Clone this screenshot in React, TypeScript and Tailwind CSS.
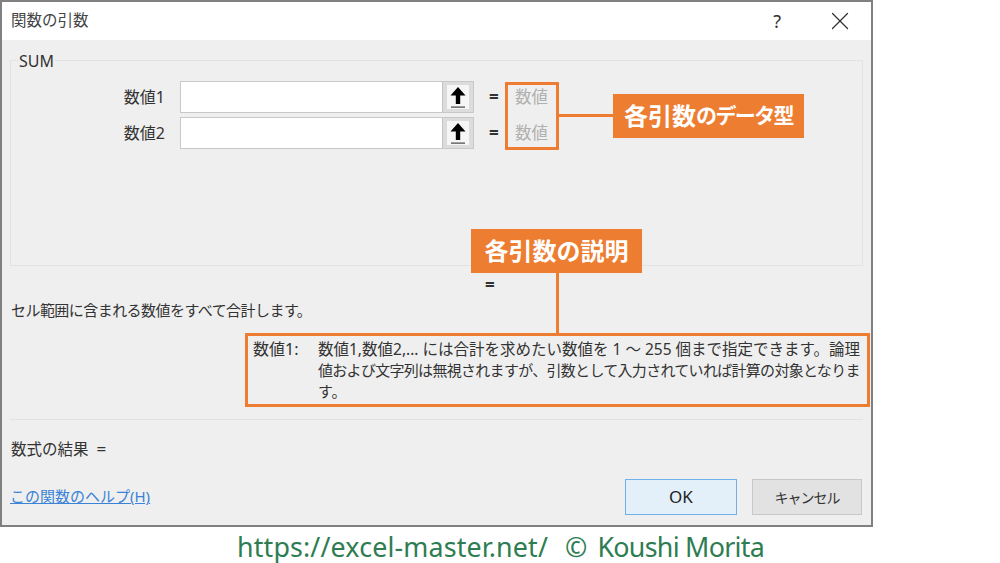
import { X } from "lucide-react";

const ui = "font-['Noto_Sans','Noto_Sans_CJK_JP',sans-serif]";

function RefButton() {
  return (
    <div className="w-[31px] h-full bg-[#dcdcdc] border-l border-[#c4c4c4] flex items-center justify-center">
      <div className="w-[22px] h-[24px] bg-[#f6f6f6] flex items-center justify-center">
        <svg width="18" height="23" viewBox="0 0 18 23">
          <path d="M9 1 L16.5 9.5 H11.2 V18 H6.8 V9.5 H1.5 Z" fill="#000" />
          <rect x="2" y="20.5" width="14" height="1.2" fill="#444" />
        </svg>
      </div>
    </div>
  );
}

function ArgRow({ label }: { label: string }) {
  return (
    <div className="flex items-center h-[32px]">
      <div className="w-[169px] text-right pr-[15px] text-[16px] text-[#333]">{label}</div>
      <div className="w-[294px] h-[32px] bg-white border border-[#c8c8c8] flex justify-end">
        <RefButton />
      </div>
      <div className="ml-[15px] w-[12px] text-[17px] text-[#333] font-bold">=</div>
      <div className="ml-[14px] text-[16.5px] text-[#b0b0b0]">数値</div>
    </div>
  );
}

export default function App() {
  return (
    <div className={`${ui} relative w-[1000px] h-[563px] bg-white`}>
      <div className="w-[873px] h-[527px] border-2 border-[#808080] bg-[#efefef] flex flex-col">
        {/* title bar */}
        <div className="h-[38px] bg-white flex items-center pl-[9px] shrink-0">
          <span className="text-[15.5px] text-[#444]">関数の引数</span>
          <span className="ml-auto text-[18px] text-[#333] mr-[44px]">?</span>
          <X className="w-[30px] h-[30px] text-[#333] mr-[16px]" strokeWidth={1} />
        </div>

        <div className="flex-1 flex flex-col px-[8px]">
          {/* SUM group */}
          <div className="relative mt-[20px] h-[206px] border border-[#e2e2e2] pt-[20px] shrink-0">
            <span className="absolute left-[7px] top-[-9px] px-[1px] bg-[#efefef] text-[16px] leading-[18px] text-[#333]">SUM</span>
            <div className="flex flex-col gap-[4px]">
              <ArgRow label="数値1" />
              <ArgRow label="数値2" />
            </div>
          </div>

          <div className="h-[20px] mt-[9px] pl-[475px] text-[17px] leading-[20px] font-bold text-[#333]">=</div>
          <div className="mt-[5px] ml-[1px] text-[15px] tracking-[-0.55px] leading-[20px] text-[#333]">セル範囲に含まれる数値をすべて合計します。</div>

          {/* argument help */}
          <div className="mt-[19px] ml-[243px] flex leading-[21px] text-[#333] h-[64px]">
            <div className="w-[65px] shrink-0 text-[16px]">数値1:</div>
            <div className="w-[548px] whitespace-nowrap">
              <div className="text-[15.5px]">数値1,数値2,... には合計を求めたい数値を 1 ～ 255 個まで指定できます。論理</div>
              <div className="text-[15px] tracking-[-0.7px]">値および文字列は無視されますが、引数として入力されていれば計算の対象となりま</div>
              <div className="text-[15px]">す。</div>
            </div>
          </div>

          <div className="mt-[16px] h-px bg-[#e2e2e2] shrink-0" />

          <div className="mt-[19px] ml-[1px] flex text-[15.5px] leading-[20px] text-[#333]">
            <span>数式の結果</span>
            <span className="ml-[8px] text-[17px] font-medium">=</span>
          </div>

          <div className="mt-[20px] flex items-start">
            <span className="mt-[7px] text-[15px] leading-[20px] text-[#3a83d6] underline">この関数のヘルプ(H)</span>
            <div className="ml-auto mr-[1px] flex gap-[15px]">
              <div className="w-[112px] h-[36px] bg-[#e3f0fa] border border-[#6fb1ea] flex items-center justify-center text-[17px] text-[#222]">OK</div>
              <div className="w-[110px] h-[36px] bg-[#e2e2e2] border border-[#c8c8c8] flex items-center justify-center text-[14px] tracking-[-1px] text-[#333]">キャンセル</div>
            </div>
          </div>
        </div>
      </div>

      <div className="flex pl-[237px] pt-[4px] text-[26.8px] leading-[32px] text-[#2e7d52] whitespace-nowrap">
        <span className="tracking-[0.16px]">https://excel-master.net/</span>
        <span className="ml-[17px]">©</span>
        <span className="ml-[10px] tracking-[-0.7px]">Koushi Morita</span>
      </div>

      {/* orange callouts */}
      <div className="absolute left-[505px] top-[82px] w-[54px] h-[68px] border-[3px] border-[#ed7d31]" />
      <div className="absolute left-[559px] top-[114px] w-[54px] h-[3px] bg-[#ed7d31]" />
      <div className="absolute left-[613px] top-[94px] w-[191px] h-[44px] bg-[#ed7d31] flex items-center justify-center text-white font-bold whitespace-nowrap text-[24px]">
        各引数<span className="text-[21px] tracking-[-1.6px]">のデータ型</span>
      </div>
      <div className="absolute left-[471px] top-[229px] w-[171px] h-[44px] bg-[#ed7d31] flex items-center justify-center text-white font-bold text-[24px]">各引数の説明</div>
      <div className="absolute left-[556px] top-[273px] w-[3px] h-[60px] bg-[#ed7d31]" />
      <div className="absolute left-[245px] top-[333px] w-[625px] h-[74px] border-[3px] border-[#ed7d31]" />
    </div>
  );
}
